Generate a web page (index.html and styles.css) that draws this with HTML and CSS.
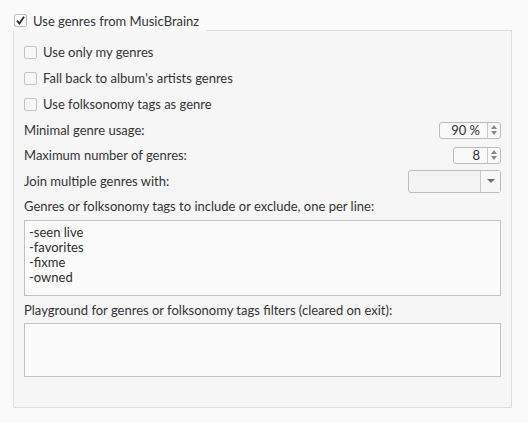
FILE: index.html
```html
<!DOCTYPE html>
<html>
<head>
<meta charset="utf-8">
<link rel="stylesheet" href="styles.css">
</head>
<body>
<div class="page">
  <div class="header">
    <label class="head-label">
      <span class="cb checked">
        <svg width="11" height="11" viewBox="0 0 11 11"><path d="M2 5.6 L4.4 8.6 L9 1.8" fill="none" stroke="#2a2a2a" stroke-width="1.8"/></svg>
      </span>
      <span class="head-text">Use genres from MusicBrainz</span>
    </label>
    <div class="head-line"></div>
  </div>
  <div class="group">
    <div class="row r26"><span class="cb"></span><span class="cb-text">Use only my genres</span></div>
    <div class="row r26"><span class="cb"></span><span class="cb-text">Fall back to album's artists genres</span></div>
    <div class="row r26"><span class="cb"></span><span class="cb-text">Use folksonomy tags as genre</span></div>
    <div class="row r26 split">
      <span>Minimal genre usage:</span>
      <div class="spin w62"><span class="spin-val">90 %</span><span class="spin-btn"><i class="up"></i><i class="down"></i></span></div>
    </div>
    <div class="row r24 split">
      <span>Maximum number of genres:</span>
      <div class="spin w48"><span class="spin-val">8</span><span class="spin-btn"><i class="up"></i><i class="down"></i></span></div>
    </div>
    <div class="row r28 split">
      <span>Join multiple genres with:</span>
      <div class="combo"><span class="combo-val"></span><span class="combo-btn"><i class="down"></i></span></div>
    </div>
    <div class="row r22"><span>Genres or folksonomy tags to include or exclude, one per line:</span></div>
    <div class="textbox tall">-seen live<br>-favorites<br>-fixme<br>-owned</div>
    <div class="row r27"><span>Playground for genres or folksonomy tags filters (cleared on exit):</span></div>
    <div class="textbox short"></div>
  </div>
</div>
</body>
</html>
```
FILE: styles.css
```css
* { box-sizing: border-box; }
html, body { margin: 0; padding: 0; }
body {
  background: #fafafa;
  font-family: "Lato", "DejaVu Sans", sans-serif;
  font-size: 13px;
  color: #343434;
  width: 528px;
  height: 423px;
  overflow: hidden;
}
.page {
  display: flex;
  flex-direction: column;
  padding-left: 13px;
  padding-right: 16px;
}
.header {
  display: flex;
  height: 31px;
}
.head-label {
  display: flex;
  align-items: center;
  height: 41px;
  padding-left: 1px;
  align-self: flex-start;
}
.head-text { margin-left: 6px; margin-right: 7px; }
.head-line {
  flex: 1;
  border-bottom: 1px solid #dcdcdc;
  height: 31px;
}
.cb {
  width: 13px;
  height: 13px;
  border: 1px solid #c4c4c4;
  border-radius: 2px;
  background: #f7f7f7;
  display: inline-flex;
  align-items: center;
  justify-content: center;
  flex: none;
}
.cb.checked { background: #fcfcfc; border-color: #bcbcbc; }
.group {
  background: #f6f6f6;
  border: 1px solid #dcdcdc;
  border-top: none;
  border-radius: 0 0 2px 2px;
  height: 377px;
  padding: 8px 10px 0 10px;
  display: flex;
  flex-direction: column;
}
.row {
  display: flex;
  align-items: center;
}
.r22 { height: 22px; }
.r24 { height: 24px; }
.r26 { height: 26px; }
.r27 { height: 27px; }
.r28 { height: 28px; }
.split { justify-content: space-between; }
.cb-text { margin-left: 6px; }
.spin {
  height: 17px;
  border: 1px solid #bcbcbc;
  border-radius: 3px;
  background: #f9f9f9;
  display: flex;
}
.w62 { width: 62px; }
.w48 { width: 48px; }
.spin-val {
  flex: 1;
  text-align: right;
  padding-right: 7px;
  line-height: 15px;
  color: #2e2e2e;
}
.spin-btn {
  width: 13px;
  border-left: 1px solid #c8c8c8;
  display: flex;
  flex-direction: column;
  align-items: center;
  justify-content: center;
  gap: 2px;
}
.spin-btn .up {
  width: 0; height: 0;
  border-left: 3px solid transparent;
  border-right: 3px solid transparent;
  border-bottom: 4px solid #8a8a8a;
}
.spin-btn .down, .combo-btn .down {
  width: 0; height: 0;
  border-left: 3px solid transparent;
  border-right: 3px solid transparent;
  border-top: 4px solid #8a8a8a;
}
.combo-btn .down {
  border-left-width: 4px;
  border-right-width: 4px;
  border-top-width: 4px;
  border-top-color: #707070;
}
.combo {
  width: 93px;
  height: 23px;
  border: 1px solid #bcbcbc;
  border-radius: 3px;
  background: #f3f3f3;
  display: flex;
}
.combo-val { flex: 1; }
.combo-btn {
  width: 20px;
  border-left: 1px solid #c8c8c8;
  display: flex;
  align-items: center;
  justify-content: center;
  background: #f7f7f7;
}
.textbox {
  border: 1px solid #c2c2c2;
  background: #fafafa;
  padding: 4px 4px;
  line-height: 15px;
  color: #2e2e2e;
}
.tall { height: 76px; margin-top: 3px; }
.short { height: 54px; }
```
